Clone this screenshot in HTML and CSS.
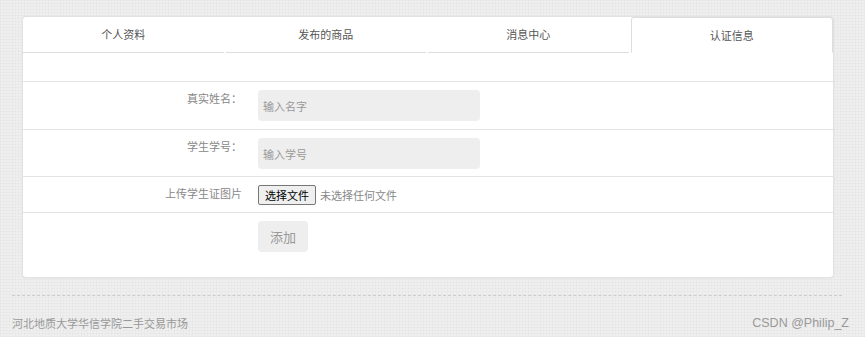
FILE: index.html
```html
<!DOCTYPE html>
<html lang="zh-CN">
<head>
    <meta charset="UTF-8">
    <meta name="viewport" content="width=device-width, initial-scale=1.0">
    <title>认证信息</title>
    <link rel="stylesheet" href="styles.css">
</head>
<body>
    <div class="panel">
        <ul class="tabs">
            <li class="tab">个人资料</li>
            <li class="tab">发布的商品</li>
            <li class="tab">消息中心</li>
            <li class="tab active">认证信息</li>
        </ul>
        <div class="tab-body">
            <table class="form-table">
                <tr>
                    <td class="label">真实姓名：</td>
                    <td><input type="text" class="field" placeholder="输入名字"></td>
                </tr>
                <tr class="tight">
                    <td class="label">学生学号：</td>
                    <td><input type="text" class="field" placeholder="输入学号"></td>
                </tr>
                <tr class="tight">
                    <td class="label">上传学生证图片</td>
                    <td class="file-cell">
                        <button class="file-btn">选择文件</button>
                        <span class="file-name">未选择任何文件</span>
                    </td>
                </tr>
                <tr>
                    <td class="label"></td>
                    <td><button class="add-btn">添加</button></td>
                </tr>
            </table>
        </div>
    </div>
    <div class="footer">
        <span class="copy">河北地质大学华信学院二手交易市场</span>
        <span class="mark">CSDN @Philip_Z</span>
    </div>
</body>
</html>
```

FILE: styles.css
```css
body {
    margin: 0;
    padding: 17px 0 0 0;
    font-family: "Noto Sans CJK SC", "Liberation Sans", sans-serif;
    font-size: 11px;
    color: #555;
    background-color: #efefef;
    background-image:
        repeating-linear-gradient(0deg, rgba(0, 0, 0, 0.018) 0, rgba(0, 0, 0, 0.018) 1px, transparent 1px, transparent 3px),
        repeating-linear-gradient(90deg, rgba(0, 0, 0, 0.018) 0, rgba(0, 0, 0, 0.018) 1px, transparent 1px, transparent 3px);
    height: 337px;
    box-sizing: border-box;
    overflow: hidden;
}

.panel {
    width: 810px;
    margin-left: 23px;
    background: #fff;
    border-radius: 3px;
    box-shadow: 0 0 0 1px #e2e2e2, 0 1px 2px rgba(0, 0, 0, 0.08);
    padding-bottom: 17px;
}

.tabs {
    list-style: none;
    margin: 0;
    padding: 0;
    display: flex;
    gap: 2px;
}

.tab {
    flex: 1;
    height: 35px;
    line-height: 35px;
    text-align: center;
    border-bottom: 1px solid #ddd;
    color: #555;
}

.tab.active {
    border: 1px solid #ddd;
    border-bottom-color: transparent;
    border-radius: 3px 3px 0 0;
    height: 34px;
    line-height: 34px;
}

.tab-body {
    padding-top: 28px;
}

.form-table {
    width: 100%;
    border-collapse: collapse;
}

.form-table td {
    border-top: 1px solid #e3e3e3;
    padding: 8px;
    vertical-align: top;
    line-height: 17px;
}

.form-table .tight td {
    padding-bottom: 7px;
}

.form-table td.label {
    width: 211px;
    text-align: right;
    color: #888;
}

.field {
    display: block;
    width: 222px;
    height: 31px;
    margin: 0;
    padding: 0 5px;
    box-sizing: border-box;
    border: none;
    border-radius: 4px;
    background: #eee;
    font-family: inherit;
    font-size: 11px;
    color: #555;
    outline: none;
}

.field::placeholder {
    color: #999;
}

.file-cell {
    display: flex;
    align-items: center;
}

.file-btn {
    height: 20px;
    padding: 0 6px;
    margin: 0 4px 0 0;
    border: 1px solid #767676;
    border-radius: 2px;
    background: #efefef;
    color: #000;
    font-family: inherit;
    font-size: 11px;
    line-height: 18px;
}

.file-name {
    color: #888;
}

.add-btn {
    display: block;
    width: 50px;
    height: 31px;
    border: none;
    border-radius: 4px;
    background: #eee;
    color: #999;
    font-family: inherit;
    font-size: 13px;
}

.footer {
    width: 830px;
    margin: 18px 0 0 12px;
    border-top: 1px dashed #ccc;
    padding-top: 19px;
    display: flex;
    justify-content: space-between;
    align-items: center;
}

.copy {
    color: #999;
}

.mark {
    font-family: "Liberation Sans", Arial, sans-serif;
    font-size: 12.5px;
    color: #999;
    margin-right: -7px;
}
```
